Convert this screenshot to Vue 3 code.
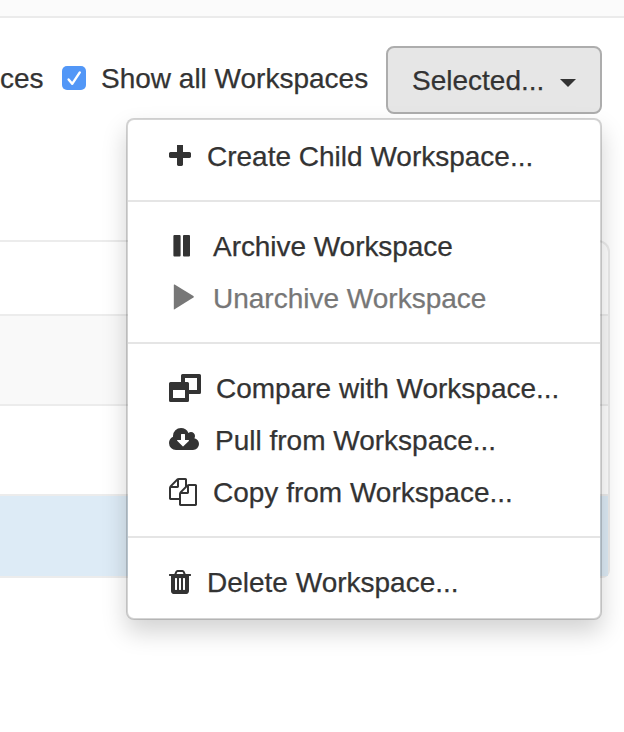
<script setup>
const icons = {
  plus: { box: '192 192 1408 1408', w: 22, h: 22, d: 'M1600 736v192q0 40-28 68t-68 28h-416v416q0 40-28 68t-68 28h-192q-40 0-68-28t-28-68v-416h-416q-40 0-68-28t-28-68v-192q0-40 28-68t68-28h416v-416q0-40 28-68t68-28h192q40 0 68 28t28 68v416h416q40 0 68 28t28 68z' },
  pause: { box: '0 0 24 26', w: 24, h: 26, d: 'M5.4 2h5.2q1 0 1 1v19.6q0 1-1 1h-5.2q-1 0-1-1v-19.6q0-1 1-1zM15 2h5q1 0 1 1v19.6q0 1-1 1h-5q-1 0-1-1v-19.6q0-1 1-1z' },
  play: { box: '0 0 26 26', w: 26, h: 26, d: 'M4.8 1q0-.8.8-.4l18.8 11.4q1 .8 0 1.5l-18.8 11.8q-.8.4-.8-.4z' },
  compare: { box: '0 0 32 28', w: 32, h: 28, d: 'M4 24h12v-8h-12zM20 16h8v-12h-12v4h2.500q1.500 0 1.500 1.500zM32 1.500v17q0 1.500-1.500 1.500h-10.500v6.500q0 1.500-1.500 1.500h-17q-1.500 0-1.500-1.500v-17q0-1.500 1.500-1.500h10.500v-6.500q0-1.500 1.500-1.500h17q1.500 0 1.500 1.500z' },
  pull: { box: '0 128 1920 1408', w: 30, h: 22, d: 'M1280 928q0-14-9-23t-23-9h-224v-352q0-13-9.500-22.500t-22.500-9.500h-192q-13 0-22.500 9.500t-9.500 22.500v352h-224q-13 0-22.500 9.500t-9.500 22.500q0 14 9 23l352 352q9 9 23 9t23-9l351-351q10-12 10-24zm640 224q0 159-112.500 271.500t-271.500 112.500h-1088q-185 0-316.500-131.500t-131.500-316.500q0-130 70-240t188-165q-2-30-2-43 0-212 150-362t362-150q156 0 285.500 87t188.500 231q71-62 166-62 106 0 181 75t75 181q0 76-41 138 130 31 213.500 135.500t83.500 238.500z' },
  copy: { box: '0 0 1792 1792', w: 28, h: 28, d: 'M1696 384q40 0 68 28t28 68v1216q0 40-28 68t-68 28h-960q-40 0-68-28t-28-68v-288h-544q-40 0-68-28t-28-68v-672q0-40 20-88t48-76l408-408q28-28 76-48t88-20h416q40 0 68 28t28 68v328q68-40 128-40h416zm-544 213l-299 299h299v-299zm-640-384l-299 299h299v-299zm196 647l316-316v-416h-384v416q0 40-28 68t-68 28h-416v640h512v-256q0-40 20-88t48-76zm956 804v-1152h-384v416q0 40-28 68t-68 28h-416v640h896z' },
  trash: { box: '192 128 1408 1536', w: 22, h: 24, d: 'M704 1376v-704q0-14-9-23t-23-9h-64q-14 0-23 9t-9 23v704q0 14 9 23t23 9h64q14 0 23-9t9-23zm256 0v-704q0-14-9-23t-23-9h-64q-14 0-23 9t-9 23v704q0 14 9 23t23 9h64q14 0 23-9t9-23zm256 0v-704q0-14-9-23t-23-9h-64q-14 0-23 9t-9 23v704q0 14 9 23t23 9h64q14 0 23-9t9-23zm-544-992h448l-48-117q-7-9-17-11h-317q-10 2-17 11zm928 32v64q0 14-9 23t-23 9h-96v948q0 83-47 143.500t-113 60.500h-832q-66 0-113-58.500t-47-141.500v-952h-96q-14 0-23-9t-9-23v-64q0-14 9-23t23-9h309l70-167q15-37 54-63t79-26h320q40 0 79 26t54 63l70 167h309q14 0 23 9t9 23z' }
}

const groups = [
  [{ icon: 'plus', label: 'Create Child Workspace...' }],
  [
    { icon: 'pause', label: 'Archive Workspace' },
    { icon: 'play', label: 'Unarchive Workspace', disabled: true }
  ],
  [
    { icon: 'compare', label: 'Compare with Workspace...' },
    { icon: 'pull', label: 'Pull from Workspace...' },
    { icon: 'copy', label: 'Copy from Workspace...' }
  ],
  [{ icon: 'trash', label: 'Delete Workspace...' }]
]
</script>

<template>
  <div class="page">
    <header class="band"></header>
    <div class="toolbar">
      <span class="filter">ces</span>
      <label class="filter all">
        <span class="check">
          <svg width="24" height="24" viewBox="0 0 24 24"><path d="M6.600 13.400l3.600 4.400 7.600-11.400" /></svg>
        </span>
        <span class="all-text">Show all Workspaces</span>
      </label>
      <div class="dropdown">
        <button class="toggle" type="button">
          <span class="toggle-text">Selected...</span><span class="caret"></span>
        </button>
        <div class="menu">
          <ul v-for="(group, i) in groups" :key="i" class="group">
            <li v-for="item in group" :key="item.icon" class="item" :class="[item.icon, { disabled: item.disabled }]">
              <span class="icon">
                <svg :width="icons[item.icon].w" :height="icons[item.icon].h" :viewBox="icons[item.icon].box">
                  <path :d="icons[item.icon].d" />
                </svg>
              </span>
              <span class="label">{{ item.label }}</span>
            </li>
          </ul>
        </div>
      </div>
    </div>
    <div class="table">
      <div class="row head"></div>
      <div class="row striped"></div>
      <div class="row"></div>
      <div class="row selected"></div>
    </div>
  </div>
</template>

<style>
body {
  margin: 0;
  background: #fff;
}
</style>

<style scoped>
.page {
  width: 624px;
  height: 732px;
  overflow: hidden;
  font-family: "Liberation Sans", Arial, sans-serif;
  font-size: 28px;
  line-height: 40px;
  color: #333;
  -webkit-text-stroke: 0.25px;
}
.band {
  height: 16px;
  background: #fbfbfb;
  border-bottom: 2px solid #ebebeb;
}
.toolbar {
  display: flex;
  align-items: flex-start;
  padding: 28px 22px 0 0;
  height: 194px;
  box-sizing: border-box;
}
.filter {
  margin-top: 13px;
  width: 62px;
  white-space: nowrap;
}
.all {
  display: flex;
  align-items: center;
  width: 324px;
}
.check {
  display: flex;
  width: 24px;
  height: 24px;
  margin: 0 15px 2px 0;
  border-radius: 5px;
  background: #5297f7;
}
.check path {
  fill: none;
  stroke: #fff;
  stroke-width: 2.4;
  stroke-linecap: round;
  stroke-linejoin: round;
}
.dropdown {
  position: relative;
  z-index: 10;
}
.toggle {
  display: flex;
  align-items: center;
  width: 216px;
  height: 68px;
  box-sizing: border-box;
  padding: 0 24px;
  border: 2px solid #adadad;
  border-radius: 8px;
  background: #e6e6e6;
  color: #333;
  font: inherit;
}
.toggle-text {
  padding-top: 2px;
}
.caret {
  margin: 6px 0 0 16px;
  border-top: 8px solid #333;
  border-left: 8px solid transparent;
  border-right: 8px solid transparent;
}
.menu {
  position: absolute;
  top: 72px;
  right: 0;
  width: 476px;
  box-sizing: border-box;
  padding: 10px 0;
  border: 2px solid rgba(0, 0, 0, 0.17);
  border-radius: 8px;
  background: #fff;
  background-clip: padding-box;
  box-shadow: 0 12px 24px rgba(0, 0, 0, 0.175);
}
.group {
  margin: 0;
  padding: 0;
  list-style: none;
}
.group + .group {
  margin-top: 18px;
  padding-top: 18px;
  border-top: 2px solid #e5e5e5;
}
.item {
  display: flex;
  align-items: center;
  height: 52px;
  padding-left: 41px;
  white-space: nowrap;
}
.label {
  padding-top: 2px;
}
.icon {
  display: flex;
  flex: none;
  width: 44px;
}
.icon svg {
  fill: #333;
}
.plus .icon,
.trash .icon {
  width: 38px;
}
.plus .icon {
  margin-top: -1px;
}
.pause .icon {
  margin-top: -1px;
}
.pause .label {
  letter-spacing: -0.05px;
}
.play .icon {
  margin-top: -2px;
}
.compare .icon {
  width: 47px;
}
.pull .icon {
  width: 46px;
  margin-top: -2px;
}
.disabled {
  color: #777;
}
.disabled svg {
  fill: #777;
}
.table {
  display: grid;
  grid-template-rows: 72px 88px 88px 80px;
  gap: 2px;
  width: 608px;
  margin-top: 28px;
  border: 2px solid #ececec;
  border-left: 0;
  border-radius: 0 12px 8px 0;
}
.row + .row {
  box-shadow: 0 -2px #ececec;
}
.striped {
  background: #f9f9f9;
}
.selected {
  background: #ddebf6;
}
</style>
